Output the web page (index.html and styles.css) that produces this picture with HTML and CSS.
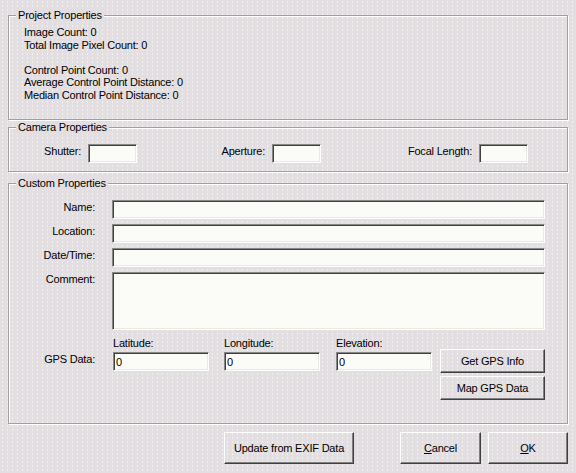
FILE: index.html
```html
<!DOCTYPE html>
<html>
<head>
<meta charset="utf-8">
<title>Properties</title>
<link rel="stylesheet" href="styles.css">
</head>
<body>
<div class="dialog">
  <section class="group g-project">
    <span class="legend">Project Properties</span>
    <div class="stats">
      <div class="stat">Image Count: 0</div>
      <div class="stat">Total Image Pixel Count: 0</div>
      <div class="stat"></div>
      <div class="stat">Control Point Count: 0</div>
      <div class="stat">Average Control Point Distance: 0</div>
      <div class="stat">Median Control Point Distance: 0</div>
    </div>
  </section>

  <section class="group g-camera">
    <span class="legend">Camera Properties</span>
    <div class="camera-grid">
      <label class="lbl">Shutter:</label><input class="edit" type="text">
      <label class="lbl">Aperture:</label><input class="edit" type="text">
      <label class="lbl">Focal Length:</label><input class="edit" type="text">
    </div>
  </section>

  <section class="group g-custom">
    <span class="legend">Custom Properties</span>
    <div class="custom-grid">
      <label class="lbl">Name:</label><input class="edit" type="text">
      <label class="lbl">Location:</label><input class="edit" type="text">
      <label class="lbl">Date/Time:</label><input class="edit" type="text">
      <label class="lbl">Comment:</label><textarea class="edit memo"></textarea>
      <label class="lbl gps-lbl">GPS Data:</label>
      <div class="gps">
        <div class="field f-lat"><span class="field-lbl">Latitude:</span><input class="edit" type="text" value="0"></div>
        <div class="field f-lon"><span class="field-lbl">Longitude:</span><input class="edit" type="text" value="0"></div>
        <div class="field f-ele"><span class="field-lbl">Elevation:</span><input class="edit" type="text" value="0"></div>
        <div class="gps-buttons">
          <button class="btn gps-btn">Get GPS Info</button>
          <button class="btn gps-btn">Map GPS Data</button>
        </div>
      </div>
    </div>
  </section>

  <div class="actions">
    <button class="btn b-update">Update from EXIF Data</button>
    <button class="btn b-cancel"><u>C</u>ancel</button>
    <button class="btn b-ok"><u>O</u>K</button>
  </div>
</div>
</body>
</html>
```

FILE: styles.css
```css
* { box-sizing: border-box; }
html, body { margin: 0; padding: 0; }
body {
  width: 576px;
  height: 473px;
  overflow: hidden;
  font-family: "Liberation Sans", Arial, sans-serif;
  font-size: 11px;
  letter-spacing: -0.2px;
  color: #000;
  background-color: #e2dee2;
  background-image: radial-gradient(circle, #f2f0ea 0.6px, transparent 0.9px);
  background-size: 5px 4px;
}

.dialog {
  display: flex;
  flex-direction: column;
  padding: 15px 8px 0;
}

.group {
  position: relative;
  border: 1px solid #a0a0a0;
  box-shadow: 1px 1px 0 #fff, inset 1px 1px 0 #fff;
}

.legend {
  position: absolute;
  top: -7px;
  left: 7px;
  padding: 0 2px;
  line-height: 13px;
  background: #e2dee2;
  white-space: nowrap;
}

/* Project */
.g-project {
  height: 105px;
  padding: 10px 0 0 15px;
}
.stat {
  height: 12.5px;
  line-height: 12.5px;
  white-space: nowrap;
}

/* Camera */
.g-camera {
  height: 45px;
  margin-top: 7px;
  padding-top: 16px;
}
.camera-grid {
  display: grid;
  grid-template-columns: 72px 49px 121px 49px 144px 49px;
  column-gap: 7px;
}

.lbl {
  text-align: right;
  line-height: 15px;
  white-space: nowrap;
}

.edit {
  -webkit-appearance: none;
  appearance: none;
  display: block;
  width: 100%;
  height: 19px;
  margin: 0;
  padding: 0 2px;
  border: 1px solid;
  border-color: #878787 #fff #fff #878787;
  box-shadow: inset 1px 1px 0 #404040, inset -1px -1px 0 #ebe9e0;
  background: #fbfcf8;
  font: inherit;
  letter-spacing: inherit;
  color: #000;
  outline: none;
  border-radius: 0;
}
.memo {
  height: 58px;
  resize: none;
  overflow: hidden;
}

/* Custom */
.g-custom {
  height: 241px;
  margin-top: 11px;
  padding-top: 16px;
}
.custom-grid {
  display: grid;
  grid-template-columns: 86px 433px;
  grid-template-rows: 19px 19px 19px 58px auto;
  column-gap: 17px;
  row-gap: 5px;
}
.gps-lbl { margin-top: 17px; }
.gps {
  display: flex;
  align-items: flex-start;
  padding-top: 2px;
}
.field {
  width: 96px;
  display: flex;
  flex-direction: column;
}
.f-lat { margin-left: 1px; }
.f-lon { margin-left: 15px; }
.f-ele { margin-left: 16px; }
.field-lbl {
  line-height: 13px;
  margin-bottom: 2px;
  white-space: nowrap;
}
.gps-buttons {
  margin-left: 8px;
  margin-top: 12px;
  width: 105px;
  display: flex;
  flex-direction: column;
  gap: 3px;
}

.btn {
  font: inherit;
  letter-spacing: inherit;
  color: #000;
  background: transparent;
  border: 1px solid;
  border-color: #fff #404040 #404040 #fff;
  box-shadow: inset -1px -1px 0 #808080;
  padding: 0;
  margin: 0;
  border-radius: 0;
  text-align: center;
}
.gps-btn { height: 24px; width: 105px; }

.actions {
  display: flex;
  justify-content: flex-end;
  margin-top: 8px;
}
.actions .btn { height: 32px; }
.b-update { width: 130px; }
.b-cancel { width: 81px; margin-left: 46px; }
.b-ok { width: 80px; margin-left: 7px; }
```
